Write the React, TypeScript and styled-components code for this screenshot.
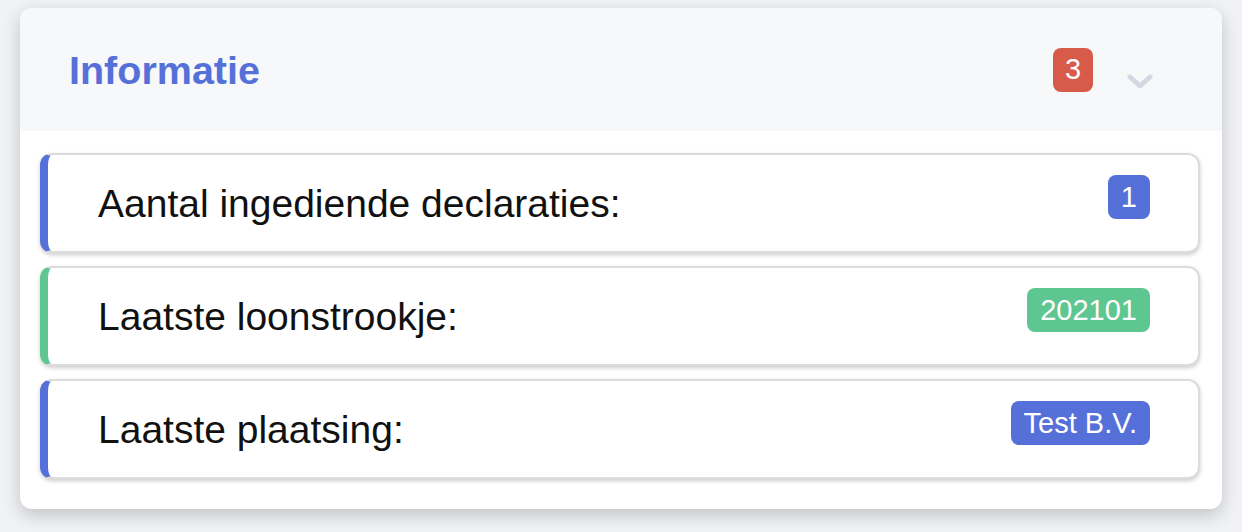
import React from 'react';
import styled, { createGlobalStyle } from 'styled-components';

const GlobalStyle = createGlobalStyle`
  html, body {
    margin: 0;
    padding: 0;
    background: #f1f2f5;
    font-family: 'Liberation Sans', Arial, sans-serif;
  }
`;

type Tone = 'primary' | 'success';

const colors: Record<Tone, string> = {
  primary: '#5670d9',
  success: '#5ec691',
};

type InfoItem = {
  label: string;
  value: string;
  tone: Tone;
};

const items: InfoItem[] = [
  { label: 'Aantal ingediende declaraties:', value: '1', tone: 'primary' },
  { label: 'Laatste loonstrookje:', value: '202101', tone: 'success' },
  { label: 'Laatste plaatsing:', value: 'Test B.V.', tone: 'primary' },
];

const ChevronDown = () => (
  <svg width="26" height="16" viewBox="0 0 26 16" fill="none">
    <path
      d="M3 3 L13 12 L23 3"
      stroke="#d5d7e3"
      strokeWidth="5"
      strokeLinecap="round"
      strokeLinejoin="round"
    />
  </svg>
);

export default function App() {
  return (
    <>
      <GlobalStyle />
      <Page>
        <Card>
          <Header>
            <Title>Informatie</Title>
            <HeaderRight>
              <CountBadge>3</CountBadge>
              <Toggle>
                <ChevronDown />
              </Toggle>
            </HeaderRight>
          </Header>
          <Body>
            {items.map((item) => (
              <Row key={item.label} tone={item.tone}>
                <Label>{item.label}</Label>
                <Pill tone={item.tone}>{item.value}</Pill>
              </Row>
            ))}
          </Body>
        </Card>
      </Page>
    </>
  );
}

const Page = styled.div`
  width: 1242px;
  height: 532px;
  padding: 8px 20px 0 20px;
  box-sizing: border-box;
`;

const Card = styled.div`
  width: 1202px;
  background: #ffffff;
  border-radius: 12px;
  overflow: hidden;
  box-shadow: 0 6px 18px rgba(0, 0, 0, 0.2);
`;

const Header = styled.div`
  display: flex;
  align-items: center;
  justify-content: space-between;
  height: 123px;
  padding: 0 69px 0 49px;
  box-sizing: border-box;
  background: #f7f8fa;
`;

const Title = styled.h2`
  margin: 0;
  font-size: 39.5px;
  font-weight: 700;
  color: #5670d9;
  position: relative;
  top: 1px;
`;

const HeaderRight = styled.div`
  display: flex;
  align-items: center;
  gap: 34px;
`;

const CountBadge = styled.span`
  display: inline-flex;
  align-items: center;
  justify-content: center;
  width: 40px;
  height: 44px;
  border-radius: 8px;
  background: #d85a49;
  color: #ffffff;
  font-size: 29px;
`;

const Toggle = styled.span`
  display: flex;
  padding-top: 24px;
`;

const Body = styled.div`
  display: flex;
  flex-direction: column;
  gap: 13px;
  padding: 22px 22px 30px 20px;
`;

const Row = styled.div<{ tone: Tone }>`
  display: flex;
  align-items: flex-start;
  justify-content: space-between;
  height: 100px;
  box-sizing: border-box;
  padding: 20px 48px 0 50px;
  background: #ffffff;
  border: 2px solid #dcdcdc;
  border-left: 8px solid ${(p) => colors[p.tone]};
  border-radius: 12px;
  box-shadow: 0 2px 4px rgba(0, 0, 0, 0.2);
`;

const Label = styled.span`
  font-size: 39px;
  color: #111111;
  line-height: 100px;
  margin-top: -21px;
`;

const Pill = styled.span<{ tone: Tone }>`
  display: inline-flex;
  align-items: center;
  justify-content: center;
  min-width: 41px;
  height: 44px;
  padding: 0 13px;
  box-sizing: border-box;
  border-radius: 8px;
  background: ${(p) => colors[p.tone]};
  color: #ffffff;
  font-size: 29px;
`;
